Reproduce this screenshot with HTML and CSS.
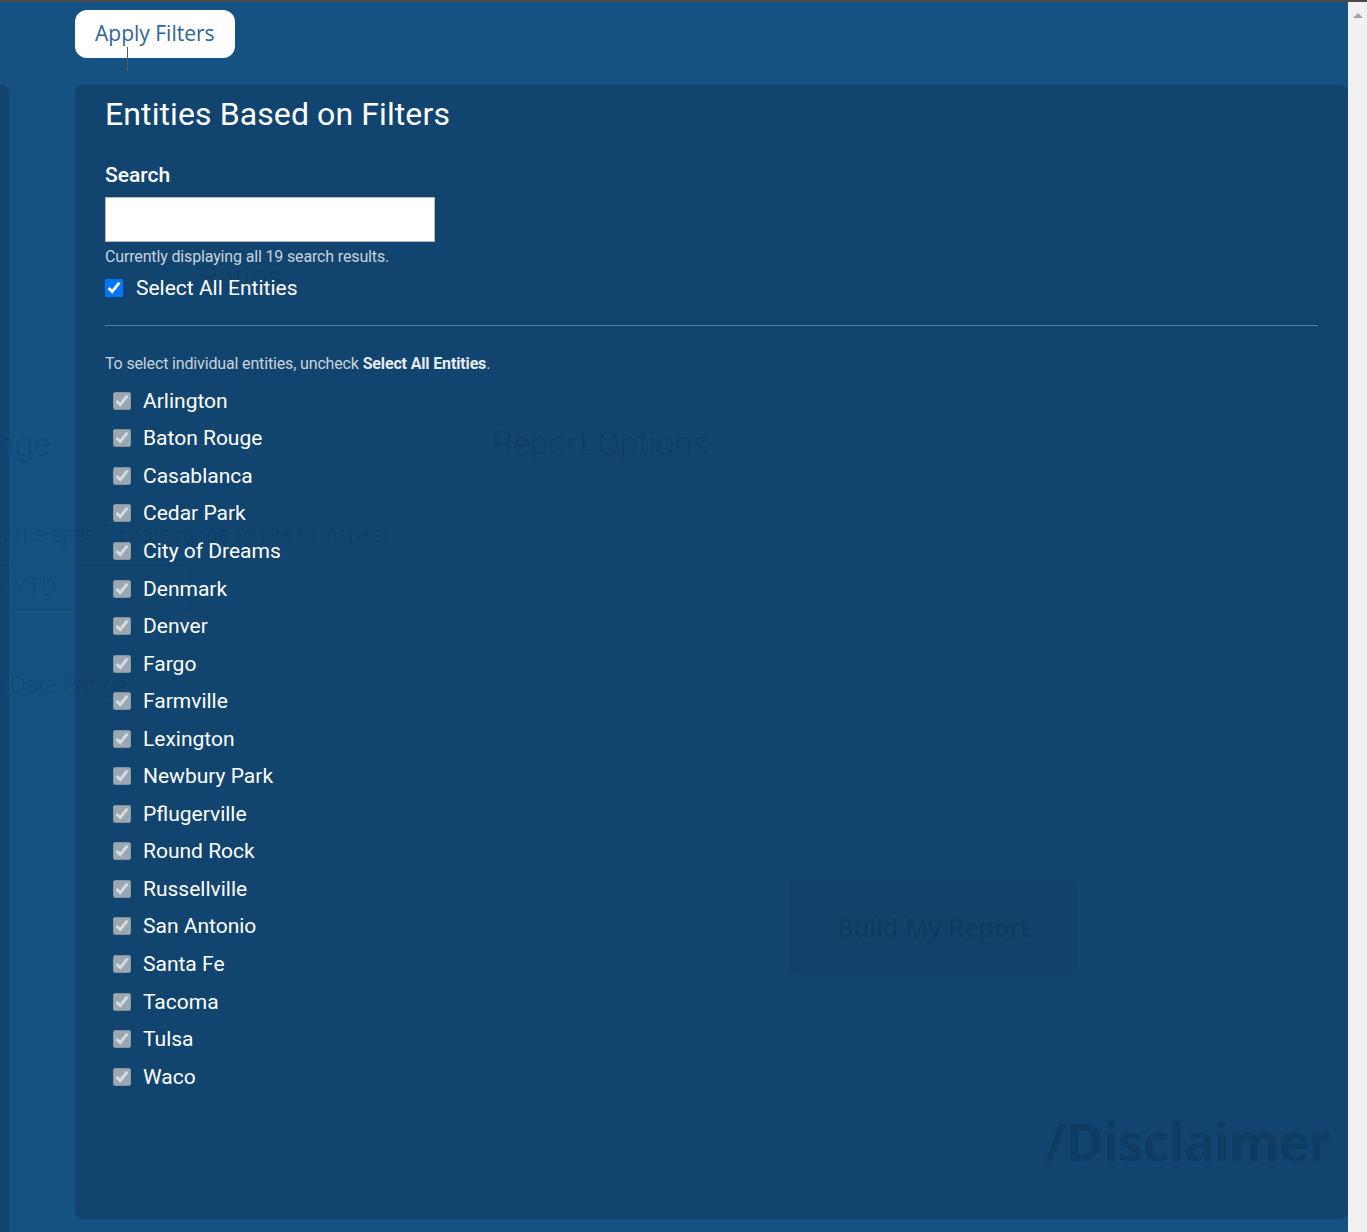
FILE: index.html
```html
<!DOCTYPE html>
<html lang="en">
<head>
  <meta charset="UTF-8">
  <title>Entities Based on Filters</title>
  <link rel="stylesheet" href="styles.css">
</head>
<body>

  <div class="topline"></div>

  <div class="window">
    <div class="viewport">

      <!-- report page behind the entity picker, seen through the backdrop -->
      <div class="behind">
        <div class="ghost ratios">Ratios</div>
        <div class="ghost range-title">nge</div>
        <div class="ghost report-title">Report Options</div>
        <div class="ghost range-hint">w the specific date range I'd like to inspect.</div>
        <div class="ghost range-select">r YTD</div>
        <div class="ghost custom-range">n Date Range</div>
        <div class="ghost build-button">Build My Report</div>
        <div class="ghost disclaimer">/Disclaimer</div>
      </div>

      <div class="toolbar">
        <button class="apply-button">Apply Filters</button>
        <div class="caret"></div>
      </div>

      <div class="content-row">
        <div class="side-card"></div>

        <div class="entities-panel">
          <div class="panel-inner">
            <h2>Entities Based on Filters</h2>

            <label class="search-label" for="entitySearch">Search</label>
            <input class="search-input" id="entitySearch" type="text">
            <div class="status-text">Currently displaying all 19 search results.</div>

            <label class="select-all">
              <input type="checkbox" checked>
              <span>Select All Entities</span>
            </label>

            <hr class="divider">

            <div class="hint-text">To select individual entities, uncheck <b>Select All Entities</b>.</div>

            <ul class="entity-list" id="entityList"></ul>
          </div>
        </div>
      </div>

    </div>

    <div class="scrollbar">
      <div class="scroll-arrow"></div>
    </div>
  </div>

  <script>
    const entities = [
      "Arlington", "Baton Rouge", "Casablanca", "Cedar Park", "City of Dreams",
      "Denmark", "Denver", "Fargo", "Farmville", "Lexington", "Newbury Park",
      "Pflugerville", "Round Rock", "Russellville", "San Antonio", "Santa Fe",
      "Tacoma", "Tulsa", "Waco"
    ];

    const list = document.getElementById("entityList");

    entities.forEach(name => {
      const li = document.createElement("li");
      li.className = "entity";
      li.innerHTML = '<input type="checkbox" checked disabled><span>' + name + '</span>';
      list.appendChild(li);
    });
  </script>
</body>
</html>
```

FILE: styles.css
```css
body {
  margin: 0;
  height: 1232px;
  overflow: hidden;
  font-family: 'Roboto', 'Liberation Sans', sans-serif;
  background-color: #155281;
}

.topline {
  height: 2px;
  background-color: #4a4a4a;
}

.window {
  display: flex;
  height: 1230px;
}

.viewport {
  flex: 1;
  position: relative;
  background-color: #155281;
  overflow: hidden;
}

.scrollbar {
  width: 19px;
  background-color: #f1f1f1;
  display: flex;
  justify-content: center;
  padding-top: 11px;
  box-sizing: border-box;
}

.scroll-arrow {
  width: 0;
  height: 0;
  border-left: 5px solid transparent;
  border-right: 5px solid transparent;
  border-bottom: 5px solid #a3a3a3;
}

/* ---------- toolbar ---------- */

.toolbar {
  position: relative;
  padding: 8px 0 0 75px;
  height: 83px;
  box-sizing: border-box;
}

.apply-button {
  height: 48px;
  padding: 0 20px 2px 20px;
  border: none;
  border-radius: 12px;
  background-color: #fff;
  color: #2b6697;
  font-family: 'Open Sans', sans-serif;
  font-size: 21px;
  cursor: pointer;
}

.caret {
  position: absolute;
  left: 127px;
  top: 45px;
  width: 1px;
  height: 24px;
  background-color: #5a5a5a;
}

/* ---------- panels ---------- */

.content-row {
  display: flex;
  gap: 66px;
  height: 1147px;
}

.side-card {
  width: 9px;
  background-color: #114570;
  border-top-right-radius: 8px;
}

.entities-panel {
  position: relative;
  flex: 1;
  height: 1134px;
  background-color: #114570;
  border-radius: 8px;
}

.panel-inner {
  position: relative;
  z-index: 2;
  padding: 10px 30px 0 30px;
  color: #fff;
}

h2 {
  margin: 0;
  font-size: 32px;
  line-height: 38px;
  font-weight: 400;
  letter-spacing: 0.1px;
}

.search-label {
  display: block;
  margin-top: 30px;
  font-size: 21px;
  line-height: 24px;
  font-weight: 500;
}

.search-input {
  display: block;
  margin-top: 10px;
  width: 330px;
  height: 45px;
  box-sizing: border-box;
  border: 1px solid #b9b9b9;
  background-color: #fff;
  outline: none;
}

.status-text {
  margin-top: 5px;
  font-size: 16px;
  line-height: 20px;
  letter-spacing: -0.15px;
  color: #c9d2db;
}

.select-all {
  display: flex;
  align-items: center;
  gap: 13px;
  margin-top: 9px;
  font-size: 21px;
  line-height: 24px;
}

.select-all input {
  margin: 0;
  width: 18px;
  height: 18px;
}

.divider {
  margin: 25px 0 0 0;
  border: none;
  border-top: 1px solid #4f7fa8;
}

.hint-text {
  margin-top: 28px;
  font-size: 16px;
  line-height: 20px;
  letter-spacing: -0.15px;
  color: #c9d2db;
}

.hint-text b {
  color: #e6ebf0;
}

.entity-list {
  list-style: none;
  margin: 8px 0 0 0;
  padding: 0 0 0 8px;
}

.entity {
  display: flex;
  align-items: center;
  gap: 12px;
  height: 37.55px;
  font-size: 21px;
}

.entity input {
  margin: 0;
  width: 18px;
  height: 18px;
}

/* ---------- report page behind ---------- */

.behind {
  position: absolute;
  inset: 0;
  z-index: 1;
  pointer-events: none;
}

.ghost {
  position: absolute;
  color: rgba(0, 0, 0, 0.1);
  white-space: nowrap;
  font-weight: 300;
}

.ratios {
  left: 199px;
  top: 257px;
  font-size: 30px;
}

.range-title {
  left: -4px;
  top: 422px;
  font-size: 34px;
}

.report-title {
  left: 492px;
  top: 422px;
  font-size: 33px;
}

.range-hint {
  left: -6px;
  top: 520px;
  font-size: 21.6px;
}

.range-select {
  left: -40px;
  top: 563px;
  width: 230px;
  height: 45px;
  box-sizing: border-box;
  padding-left: 39px;
  border: 1px solid rgba(0, 0, 0, 0.08);
  font-size: 23px;
  line-height: 43px;
}

.custom-range {
  left: -8px;
  top: 670px;
  font-size: 23px;
}

.build-button {
  left: 790px;
  top: 878px;
  width: 287px;
  height: 95px;
  box-sizing: border-box;
  padding-top: 30px;
  text-align: center;
  border-radius: 6px;
  background-color: rgba(0, 0, 0, 0.04);
  font-family: 'Open Sans', sans-serif;
  font-weight: 600;
  font-size: 25px;
}

.disclaimer {
  left: 1045px;
  top: 1103px;
  font-family: 'Open Sans', sans-serif;
  font-weight: 700;
  font-size: 52px;
  letter-spacing: -1px;
  color: rgba(0, 0, 0, 0.12);
}
```
